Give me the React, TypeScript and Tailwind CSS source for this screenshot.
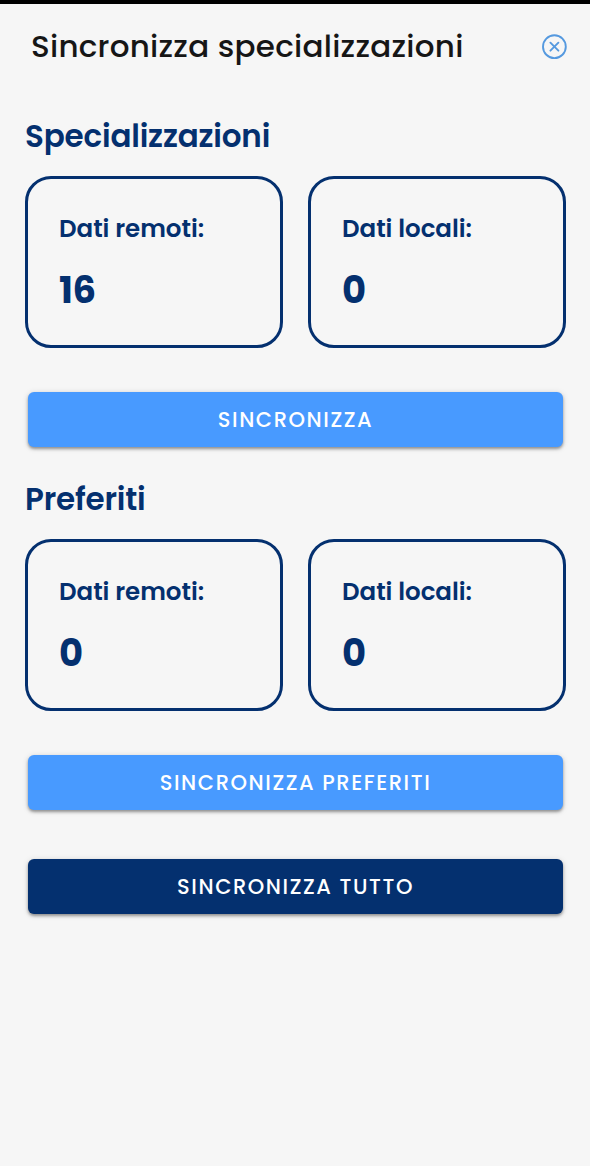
type StatCardProps = {
  label: string;
  value: number;
};

function StatCard({ label, value }: StatCardProps) {
  return (
    <div className="h-[172px] flex-1 rounded-[26px] border-[3px] border-[#04306f] pl-[31px] pt-[34px]">
      <p className="text-[24.5px] font-semibold leading-8 tracking-[-0.02px]">{label}</p>
      <p className="mt-[25px] text-[37px] font-bold leading-10 tracking-[-0.3px]">{value}</p>
    </div>
  );
}

type SyncSectionProps = {
  title: string;
  remote: number;
  local: number;
};

function SyncSection({ title, remote, local }: SyncSectionProps) {
  return (
    <section className="pl-[25px] pr-6 text-[#04306f]">
      <h2 className="text-[31px] font-semibold leading-10 tracking-[-0.18px]">{title}</h2>
      <div className="mt-5 flex gap-[25px]">
        <StatCard label="Dati remoti:" value={remote} />
        <StatCard label="Dati locali:" value={local} />
      </div>
    </section>
  );
}

function SyncButton({ label, className }: { label: string; className: string }) {
  return (
    <button
      type="button"
      className={`ml-7 block h-[55px] w-[535px] rounded-md text-center text-[21px] font-medium uppercase leading-[55px] tracking-[1.58px] text-white shadow-[0_2px_3px_rgba(0,0,0,0.35),0_1px_6px_rgba(0,0,0,0.14)] ${className}`}
    >
      {label}
    </button>
  );
}

function CloseIcon() {
  return (
    <svg width="26" height="26" viewBox="0 0 26 26" fill="none" stroke="#5599df" strokeWidth="1.9" strokeLinecap="round">
      <circle cx="13.4" cy="12.7" r="11.4" />
      <path d="M9.4 8.7l8 8M17.4 8.7l-8 8" />
    </svg>
  );
}

export default function App() {
  return (
    <div className="h-[1166px] w-[590px] overflow-hidden border-t-4 border-black bg-[#f6f6f6] font-['Poppins','Inter',sans-serif]">
      <header className="flex h-[86px] items-center justify-between pl-[31px] pr-[23px]">
        <h1 className="-mt-0.5 text-[31px] font-medium leading-10 tracking-[0.24px] text-[#161616]">
          Sincronizza specializzazioni
        </h1>
        <button type="button" aria-label="Chiudi">
          <CloseIcon />
        </button>
      </header>

      <main className="pt-[26px]">
        <SyncSection title="Specializzazioni" remote={16} local={0} />
        <SyncButton label="Sincronizza" className="mt-11 bg-[#489aff]" />

        <div className="mt-8">
          <SyncSection title="Preferiti" remote={0} local={0} />
        </div>
        <SyncButton label="Sincronizza preferiti" className="mt-11 bg-[#489aff]" />
        <SyncButton label="Sincronizza tutto" className="mt-[49px] bg-[#04306f]" />
      </main>
    </div>
  );
}
